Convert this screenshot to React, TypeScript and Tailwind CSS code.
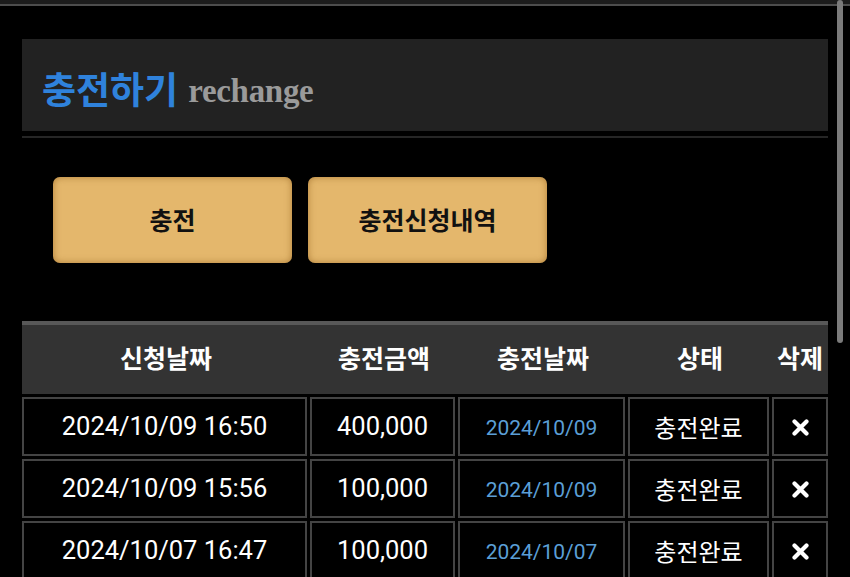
import React from "react";

const rows = [
  { req: "2024/10/09 16:50", amt: "400,000", date: "2024/10/09", status: "충전완료" },
  { req: "2024/10/09 15:56", amt: "100,000", date: "2024/10/09", status: "충전완료" },
  { req: "2024/10/07 16:47", amt: "100,000", date: "2024/10/07", status: "충전완료" },
];

const XIcon = () => (
  <svg width="17" height="17" viewBox="0 0 17 17" className="inline-block">
    <path d="M2.5 2.5 L14.5 14.5 M14.5 2.5 L2.5 14.5" stroke="#fff" strokeWidth="4.2" strokeLinecap="round" />
  </svg>
);

const kr = "font-['Noto_Sans_CJK_KR','Noto_Sans',sans-serif]";
const num = "font-['Roboto','Liberation_Sans',sans-serif]";

export default function App() {
  return (
    <div className="relative w-[850px] h-[577px] overflow-hidden bg-black">
      <div className="h-[6px] bg-[#1c1c1c] border-b-2 border-[#4d4d4d]" />
      {/* scrollbar */}
      <div className="absolute left-[837px] top-0 w-[6px] h-[343px] rounded-full bg-[#7b7b7b]" />
      <div className="pl-[22px] pr-[22px]">
        <div className="mt-[33px] h-[92px] bg-[#222222] flex items-center pl-[20px] pt-[6px]">
          <span className={`${kr} text-[37px] font-bold text-[#2f82dc] leading-none tracking-[0px]`}>충전하기</span>
          <span className="ml-[10px] font-['Liberation_Serif',serif] font-bold text-[33px] text-[#9a9a9a] leading-none mt-[6px] tracking-[-0.3px]">rechange</span>
        </div>
        <div className="mt-[5px] h-[2px] bg-[#262626]" />
        <div className="mt-[39px] flex gap-[16px] pl-[31px]">
          <div className={`${kr} w-[239px] h-[86px] rounded-[7px] bg-[#e4b76c] shadow-[inset_0_0_7px_rgba(140,90,25,0.6),0_2px_2px_rgba(0,0,0,0.6)] flex items-center justify-center text-[25px] font-bold text-[#111]`}>
            충전
          </div>
          <div className={`${kr} w-[239px] h-[86px] rounded-[7px] bg-[#e4b76c] shadow-[inset_0_0_7px_rgba(140,90,25,0.6),0_2px_2px_rgba(0,0,0,0.6)] flex items-center justify-center text-[25px] font-bold text-[#111]`}>
            충전신청내역
          </div>
        </div>
        <div className="mt-[58px] border-t-4 border-[#585858]">
          <div className={`${kr} h-[69px] bg-[#333333] grid grid-cols-[288px_148px_170px_144px_56px] text-white text-[25px] font-bold items-center text-center pb-[4px]`}>
            <div>신청날짜</div>
            <div>충전금액</div>
            <div>충전날짜</div>
            <div>상태</div>
            <div>삭제</div>
          </div>
          <div className="flex flex-col gap-[3px] mt-[3px]">
            {rows.map((r, i) => (
              <div key={i} className="grid grid-cols-[285px_145px_167px_141px_56px] gap-[3px] h-[59px]">
                <div className={`${num} border-2 border-[#444] flex items-center justify-center text-white text-[25.5px]`}>{r.req}</div>
                <div className={`${num} border-2 border-[#444] flex items-center justify-center text-white text-[25.5px]`}>{r.amt}</div>
                <div className={`${num} border-2 border-[#444] flex items-center justify-center text-[#5b9fd6] text-[21px] pt-[4px]`}>{r.date}</div>
                <div className={`${kr} border-2 border-[#444] flex items-center justify-center text-white text-[24px]`}>{r.status}</div>
                <div className="border-2 border-[#444] flex items-center justify-center pt-[2px]"><XIcon /></div>
              </div>
            ))}
          </div>
        </div>
      </div>
    </div>
  );
}
